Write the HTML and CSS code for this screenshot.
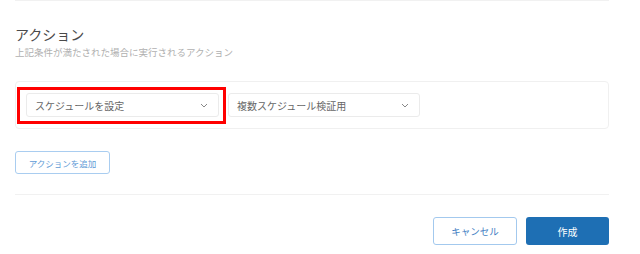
FILE: index.html
```html
<!DOCTYPE html>
<html lang="ja">
<head>
    <meta charset="UTF-8">
    <meta name="viewport" content="width=device-width, initial-scale=1.0">
    <title>アクション</title>
    <link rel="stylesheet" href="styles.css">
</head>
<body>
    <div class="page">
        <div class="divider top"></div>

        <h2 class="title">アクション</h2>
        <p class="subtitle">上記条件が満たされた場合に実行されるアクション</p>

        <div class="action-row">
            <div class="highlight-wrap">
                <div class="select wide">
                    <span>スケジュールを設定</span>
                    <svg class="chevron" width="8" height="5" viewBox="0 0 8 5"><path d="M1 1l3 3 3-3" fill="none" stroke="#888" stroke-width="1"/></svg>
                </div>
                <!-- 注釈の赤枠 -->
                <div class="highlight"></div>
            </div>
            <div class="select">
                <span>複数スケジュール検証用</span>
                <svg class="chevron" width="8" height="5" viewBox="0 0 8 5"><path d="M1 1l3 3 3-3" fill="none" stroke="#888" stroke-width="1"/></svg>
            </div>
        </div>

        <button class="btn-add">アクションを追加</button>

        <div class="divider bottom"></div>

        <div class="footer">
            <button class="btn-cancel">キャンセル</button>
            <button class="btn-create">作成</button>
        </div>
    </div>
</body>
</html>
```

FILE: styles.css
```css
body { margin: 0; background: #fff; font-family: "Noto Sans CJK JP", "Noto Sans", sans-serif; color: #444; }
.page { width: 594px; padding: 0 31px 0 15px; }
.divider { height: 1px; background: #f1f1f1; }
.divider.bottom { margin-top: 20px; }

.title { margin: 0; padding-top: 23px; font-size: 14px; font-weight: 400; line-height: 20px; color: #4a4a4a; }
.subtitle { margin: 1px 0 0; font-size: 9.5px; line-height: 14px; color: #b0b0b0; }

.action-row { display: flex; gap: 9px; margin-top: 22px; padding: 11px 10px; border: 1px solid #f0f0f0; border-radius: 4px; }
.highlight-wrap { position: relative; }
.highlight { position: absolute; left: -9px; top: -6px; right: -7px; bottom: -7px; border: 3px solid #ff0000; }

.select { display: flex; align-items: center; justify-content: space-between; box-sizing: border-box; width: 192px; height: 24px; padding: 0 8px 0 8px; border: 1px solid #ebebeb; border-radius: 3px; font-size: 10px; color: #666; }
.select.wide { width: 193px; }
.chevron { display: block; margin-right: 2px; }

button { font-family: inherit; cursor: pointer; background: #fff; }
.btn-add { display: block; margin-top: 22px; width: 95px; height: 23px; border: 1px solid #a9cdf0; border-radius: 3px; font-size: 8.5px; color: #5f9bd6; padding: 0; }

.footer { display: flex; justify-content: flex-end; gap: 9px; margin-top: 22px; }
.btn-cancel { width: 84px; height: 28px; border: 1px solid #a3c9ee; border-radius: 3px; font-size: 9.5px; color: #3f80c2; padding: 0; }
.btn-create { width: 83px; height: 28px; border: none; border-radius: 3px; background: #1e6fb4; color: #fff; font-size: 10px; padding: 0; }
```
